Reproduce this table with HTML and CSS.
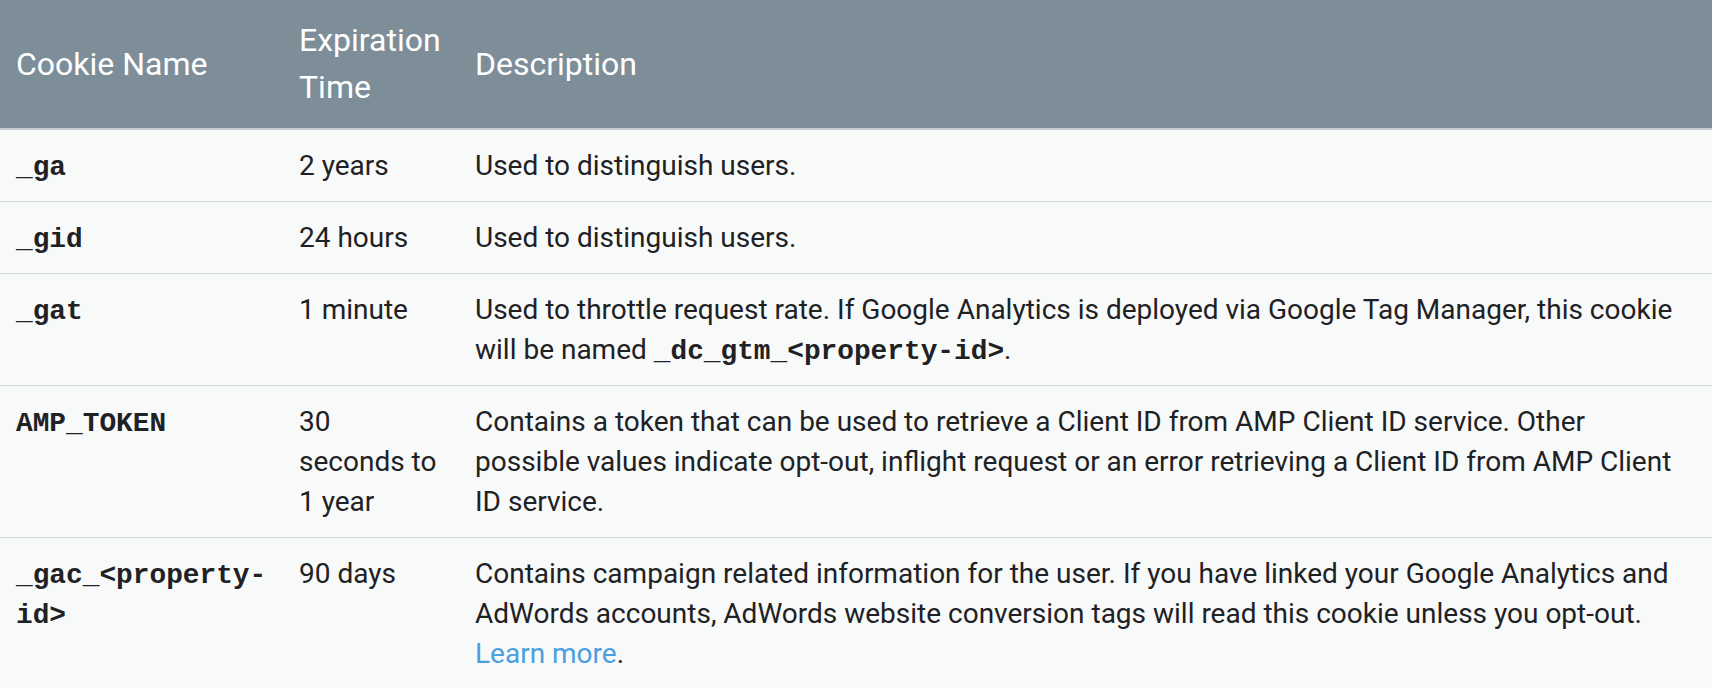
FILE: index.html
```html
<!DOCTYPE html>
<html lang="en">
<head>
<meta charset="utf-8">
<title>Cookies</title>
<link rel="stylesheet" href="styles.css">
</head>
<body>
<table class="cookies">
  <colgroup>
    <col class="col-name">
    <col class="col-exp">
    <col class="col-desc">
  </colgroup>
  <thead>
    <tr>
      <th>Cookie Name</th>
      <th>Expiration Time</th>
      <th>Description</th>
    </tr>
  </thead>
  <tbody>
    <tr>
      <td><code>_ga</code></td>
      <td>2 years</td>
      <td>Used to distinguish users.</td>
    </tr>
    <tr>
      <td><code>_gid</code></td>
      <td>24 hours</td>
      <td>Used to distinguish users.</td>
    </tr>
    <tr>
      <td><code>_gat</code></td>
      <td>1 minute</td>
      <td>Used to throttle request rate. If Google Analytics is deployed via Google Tag Manager, this cookie will be named <code>_dc_gtm_&lt;property-id&gt;</code>.</td>
    </tr>
    <tr>
      <td><code>AMP_TOKEN</code></td>
      <td>30 seconds to 1 year</td>
      <td>Contains a token that can be used to retrieve a Client ID from AMP Client ID service. Other possible values indicate opt-out, inflight request or an error retrieving a Client ID from AMP Client ID service.</td>
    </tr>
    <tr>
      <td><code>_gac_&lt;property-id&gt;</code></td>
      <td>90 days</td>
      <td>Contains campaign related information for the user. If you have linked your Google Analytics and AdWords accounts, AdWords website conversion tags will read this cookie unless you opt-out. <a href="#" class="link">Learn more</a>.</td>
    </tr>
  </tbody>
</table>
</body>
</html>
```
FILE: styles.css
```css
html, body {
  margin: 0;
  padding: 0;
  background: #f8f9f9;
}

.cookies {
  width: 1712px;
  border-collapse: collapse;
  table-layout: fixed;
  font-family: Roboto, "Liberation Sans", sans-serif;
  color: #202124;
}

.col-name { width: 283px; }
.col-exp { width: 176px; }
.col-desc { width: auto; }

.cookies th {
  background: #7d8e99;
  color: #ffffff;
  font-size: 32px;
  font-weight: 400;
  line-height: 47px;
  text-align: left;
  vertical-align: middle;
  padding: 17px 20px 17px 16px;
  height: 94px;
  border-bottom: 2px solid #c6ced3;
}

.cookies td {
  background: #f8f9f9;
  font-size: 28px;
  line-height: 40px;
  vertical-align: top;
  padding: 16px 20px 15px 16px;
  border-bottom: 1px solid #d3d9dc;
}

.cookies code {
  font-family: "Liberation Mono", "DejaVu Sans Mono", monospace;
  font-weight: bold;
  font-size: 27.8px;
  line-height: 1;
  color: #202124;
}

.link {
  color: #4b9fe1;
  text-decoration: none;
}
```
